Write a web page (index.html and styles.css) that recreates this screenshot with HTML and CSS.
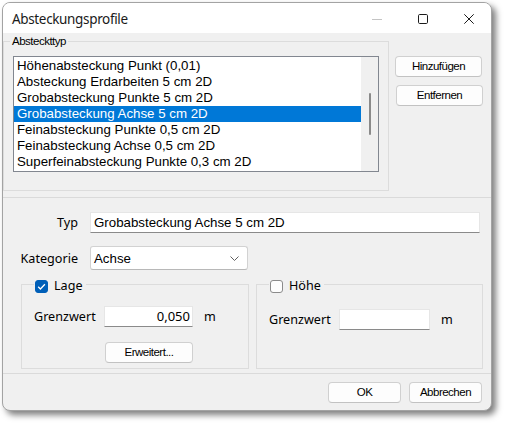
FILE: index.html
```html
<!DOCTYPE html>
<html lang="de">
<head>
<meta charset="utf-8">
<title>Absteckungsprofile</title>
<link rel="stylesheet" href="styles.css">
</head>
<body>
<div class="window">
  <div class="titlebar">
    <span class="title">Absteckungsprofile</span>
    <div class="controls">
      <span class="ctl"><svg width="10" height="10" viewBox="0 0 10 10"><line x1="0" y1="5.5" x2="10" y2="5.5" stroke="#c4c4c4" stroke-width="1"/></svg></span>
      <span class="ctl"><svg width="10" height="10" viewBox="0 0 10 10"><rect x="0.5" y="0.5" width="9" height="9" rx="1.2" fill="none" stroke="#1b1b1b" stroke-width="1"/></svg></span>
      <span class="ctl"><svg width="10" height="10" viewBox="0 0 10 10"><path d="M0.3 0.3L9.7 9.7M9.7 0.3L0.3 9.7" stroke="#1b1b1b" stroke-width="1"/></svg></span>
    </div>
  </div>
  <div class="content">
    <div class="top">
      <fieldset class="group typgroup">
        <legend class="legend">Absteckttyp</legend>
        <div class="listbox">
          <ul class="items">
            <li>Höhenabsteckung Punkt (0,01)</li>
            <li>Absteckung Erdarbeiten 5 cm 2D</li>
            <li>Grobabsteckung Punkte 5 cm 2D</li>
            <li class="selected">Grobabsteckung Achse 5 cm 2D</li>
            <li>Feinabsteckung Punkte 0,5 cm 2D</li>
            <li>Feinabsteckung Achse 0,5 cm 2D</li>
            <li>Superfeinabsteckung Punkte 0,3 cm 2D</li>
          </ul>
          <div class="scrollbar"><div class="thumb"></div></div>
        </div>
      </fieldset>
      <div class="side-buttons">
        <button class="btn side">Hinzufügen</button>
        <button class="btn side">Entfernen</button>
      </div>
    </div>
    <div class="details">
      <div class="row">
        <span class="lbl">Typ</span>
        <div class="input wide">Grobabsteckung Achse 5 cm 2D</div>
      </div>
      <div class="row kat">
        <span class="lbl">Kategorie</span>
        <div class="select">
          <span>Achse</span>
          <svg class="chev" width="9" height="5" viewBox="0 0 9 5"><path d="M0.5 0.5L4.5 4.5L8.5 0.5" fill="none" stroke="#5f5f5f" stroke-width="1"/></svg>
        </div>
      </div>
      <div class="groups">
        <fieldset class="group opt lage">
          <legend class="optlegend">
            <span class="cb checked"><svg width="13" height="13" viewBox="0 0 13 13"><path d="M3.2 6.8L5.4 9L9.9 4.3" fill="none" stroke="#fff" stroke-width="1.3"/></svg></span>
            <span class="cbtext">Lage</span>
          </legend>
          <div class="grow">
            <span class="glbl">Grenzwert</span>
            <div class="input num">0,050</div>
            <span class="unit">m</span>
          </div>
          <button class="btn more">Erweitert...</button>
        </fieldset>
        <fieldset class="group opt hoehe">
          <legend class="optlegend">
            <span class="cb"></span>
            <span class="cbtext">Höhe</span>
          </legend>
          <div class="grow">
            <span class="glbl">Grenzwert</span>
            <div class="input num"></div>
            <span class="unit">m</span>
          </div>
        </fieldset>
      </div>
    </div>
    <div class="footer">
      <button class="btn foot">OK</button>
      <button class="btn foot">Abbrechen</button>
    </div>
  </div>
</div>
</body>
</html>
```

FILE: styles.css
```css
* { box-sizing: border-box; }
html, body { margin: 0; padding: 0; background: #ffffff; }
body { width: 507px; height: 426px; overflow: hidden; font-family: "Noto Sans", "Liberation Sans", sans-serif; color: #000; }

.window {
  margin: 2px 0 0 2px;
  width: 490px;
  height: 409px;
  border: 1px solid #a3a3a3;
  border-radius: 8px;
  overflow: hidden;
  box-shadow: 4px 4px 6px rgba(0,0,0,0.5);
  background: #f0f0f0;
  display: flex;
  flex-direction: column;
}

.titlebar {
  height: 30px;
  background: #ffffff;
  display: flex;
  align-items: center;
  flex: none;
}
.title {
  padding-left: 9px;
  font-size: 13.5px;
  letter-spacing: -0.35px;
  color: #1a1a1a;
  flex: 1;
  margin-top: 1px;
}
.controls { display: flex; height: 30px; margin-right: -1px; }
.ctl { width: 46px; height: 30px; display: flex; align-items: center; justify-content: center; }
.ctl svg { display: block; margin-top: 1px; }

.content { flex: 1; display: flex; flex-direction: column; }

.top {
  height: 165px;
  border-bottom: 1px solid #dadada;
  display: flex;
  align-items: flex-start;
  flex: none;
}

.group {
  margin: 0;
  border: 1px solid #dcdcdc;
  border-radius: 0;
  min-width: 0;
}
.legend {
  font-family: "Liberation Sans", Arial, sans-serif;
  font-size: 11.5px;
  letter-spacing: -0.5px;
  line-height: 14px;
  padding: 0 2px;
  margin-left: -3px;
  color: #000;
}
.typgroup {
  width: 386px;
  height: 157px;
  margin-top: 1px;
  padding: 8px 9px 0 9px;
}

.listbox {
  width: 366px;
  height: 116px;
  border: 1px solid #828790;
  background: #fff;
  display: flex;
}
.items {
  list-style: none;
  margin: 0;
  padding: 1px 0 0 0;
  flex: 1;
  font-family: "Liberation Sans", Arial, sans-serif;
  font-size: 13.3px;
  line-height: 16px;
}
.items li { height: 16px; padding-left: 3px; white-space: nowrap; }
.items li.selected { background: #0078d7; color: #fff; }
.scrollbar {
  width: 17px;
  background: #f0f0f0;
  display: flex;
  justify-content: center;
  padding-top: 36px;
}
.thumb { width: 2px; height: 42px; background: #8a8a8a; border-radius: 1px; margin-left: 1px; }

.side-buttons {
  display: flex;
  flex-direction: column;
  gap: 8px;
  margin-left: 6px;
  margin-top: 23px;
}

.btn {
  font-family: "Liberation Sans", Arial, sans-serif;
  font-size: 11.5px;
  letter-spacing: -0.5px;
  color: #000;
  background: #fdfdfd;
  border: 1px solid #d0d0d0;
  border-bottom-color: #c2c2c2;
  border-radius: 4px;
  height: 21px;
  padding: 0;
  line-height: 19px;
  margin: 0;
}
.side { width: 87px; }
.side + .side { margin-left: 1px; }

.details {
  height: 176px;
  border-bottom: 1px solid #dadada;
  padding: 14px 7px 0 0;
  flex: none;
}
.row { display: flex; align-items: center; height: 21px; }
.row.kat { height: 24px; margin-top: 13px; }
.lbl {
  width: 75px;
  text-align: right;
  margin-right: 12px;
  font-size: 12.6px;
  color: #000;
}

.input {
  background: #fff;
  border: 1px solid #e6e6e6;
  border-bottom: 1px solid #8a8a8a;
  height: 21px;
}
.input.wide {
  width: 390px;
  font-family: "Liberation Sans", Arial, sans-serif;
  font-size: 13.3px;
  line-height: 19px;
  padding-left: 3px;
}

.select {
  width: 158px;
  height: 24px;
  background: #fff;
  border: 1px solid #d2d2d2;
  border-bottom-color: #b8b8b8;
  border-radius: 3px;
  display: flex;
  align-items: center;
  justify-content: space-between;
  padding: 0 8px 0 3px;
  font-family: "Liberation Sans", Arial, sans-serif;
  font-size: 13.3px;
}
.chev { display: block; }

.groups {
  display: flex;
  gap: 7px;
  margin-left: 18px;
  margin-top: 7px;
}
.opt {
  width: 228px;
  height: 92px;
  padding: 0 0 5px 12px;
}
.hoehe { width: 227px; }
.optlegend {
  padding: 0 3px 0 1px;
  margin-left: 0;
  height: 14px;
  display: flex;
  align-items: flex-start;
  font-size: 12.6px;
}
.cb {
  width: 13px;
  height: 13px;
  border: 1px solid #8b8b8b;
  border-radius: 3px;
  background: #fdfdfd;
  margin-top: 3px;
  display: block;
}
.cb svg { display: block; margin: -1px; }
.cb.checked { background: #005fb8; border-color: #005fb8; }
.cbtext { margin-left: 6px; line-height: 18px; }

.grow { display: flex; align-items: center; height: 21px; margin-top: 15px; }
.hoehe .grow { margin-top: 18px; }
.glbl { width: 70px; font-size: 12.6px; }
.input.num {
  width: 89px;
  text-align: right;
  font-size: 13px;
  line-height: 19px;
  padding-right: 2px;
}
.hoehe .input.num { width: 91px; }
.unit { margin-left: 11px; font-size: 12.6px; }

.more { width: 88px; margin-top: 15px; margin-left: 71px; display: block; }

.footer {
  flex: 1;
  display: flex;
  justify-content: flex-end;
  gap: 8px;
  padding: 8px 9px 0 0;
}
.foot { width: 73px; }
```
